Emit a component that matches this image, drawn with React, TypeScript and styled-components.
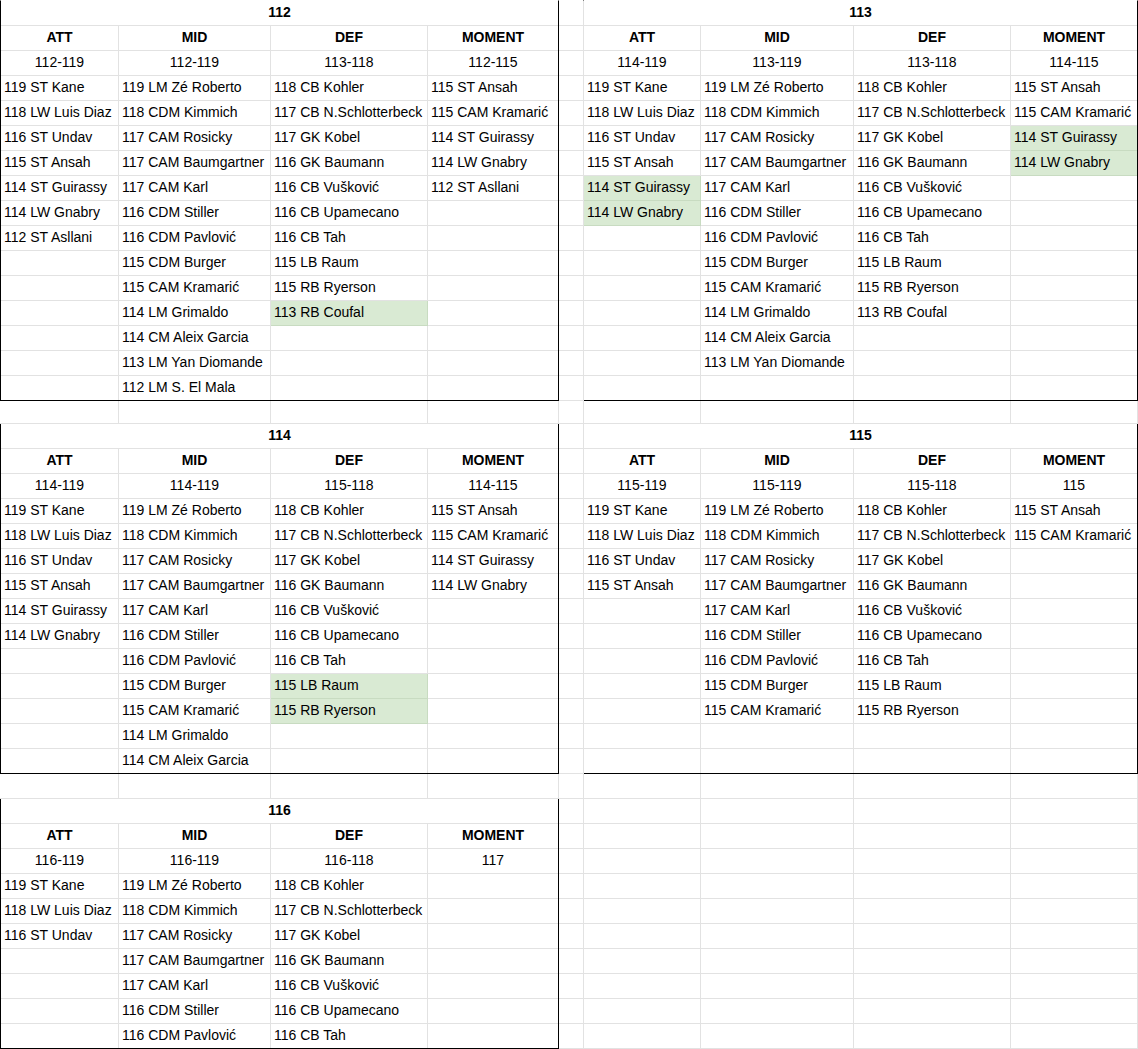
import styled, { createGlobalStyle } from 'styled-components'

const GlobalStyle = createGlobalStyle`
  html, body {
    margin: 0;
    padding: 0;
    background: #fff;
    overflow: hidden;
  }
  body {
    font-family: 'Liberation Sans', Arial, sans-serif;
  }
`

const GRID = '#e2e2e2'
const GREEN = '#d9ead3'

// sheet columns: A-D left tables, E spacer, F-I right tables
const SHEET_COLS = [119, 152, 157, 131, 25, 117, 153, 157, 127]
const SHEET_ROWS = [
  ...Array(16).fill(25),
  23,
  ...Array(14).fill(25),
  25,
  ...Array(11).fill(25),
]
const INNER_COLS = {
  left: [118, 152, 157, 130],
  right: [117, 153, 157, 126],
}

type Side = 'left' | 'right'
type Entry = string | { text: string; green: true }

interface Column {
  title: string
  range: string
  items: Entry[]
}

interface BlockData {
  level: string
  side: Side
  row: number
  rows: number
  columns: Column[]
}

const g = (text: string): Entry => ({ text, green: true })

const ATT = [
  '119 ST Kane',
  '118 LW Luis Diaz',
  '116 ST Undav',
  '115 ST Ansah',
  '114 ST Guirassy',
  '114 LW Gnabry',
  '112 ST Asllani',
]
const MID = [
  '119 LM Zé Roberto',
  '118 CDM Kimmich',
  '117 CAM Rosicky',
  '117 CAM Baumgartner',
  '117 CAM Karl',
  '116 CDM Stiller',
  '116 CDM Pavlović',
  '115 CDM Burger',
  '115 CAM Kramarić',
  '114 LM Grimaldo',
  '114 CM Aleix Garcia',
  '113 LM Yan Diomande',
  '112 LM S. El Mala',
]
const DEF = [
  '118 CB Kohler',
  '117 CB N.Schlotterbeck',
  '117 GK Kobel',
  '116 GK Baumann',
  '116 CB Vušković',
  '116 CB Upamecano',
  '116 CB Tah',
  '115 LB Raum',
  '115 RB Ryerson',
  '113 RB Coufal',
]
const MOMENT = [
  '115 ST Ansah',
  '115 CAM Kramarić',
  '114 ST Guirassy',
  '114 LW Gnabry',
  '112 ST Asllani',
]

const BLOCKS: BlockData[] = [
  {
    level: '112',
    side: 'left',
    row: 0,
    rows: 16,
    columns: [
      { title: 'ATT', range: '112-119', items: ATT },
      { title: 'MID', range: '112-119', items: MID },
      { title: 'DEF', range: '113-118', items: [...DEF.slice(0, 9), g(DEF[9])] },
      { title: 'MOMENT', range: '112-115', items: MOMENT },
    ],
  },
  {
    level: '113',
    side: 'right',
    row: 0,
    rows: 16,
    columns: [
      { title: 'ATT', range: '114-119', items: [...ATT.slice(0, 4), g(ATT[4]), g(ATT[5])] },
      { title: 'MID', range: '113-119', items: MID.slice(0, 12) },
      { title: 'DEF', range: '113-118', items: DEF },
      { title: 'MOMENT', range: '114-115', items: [...MOMENT.slice(0, 2), g(MOMENT[2]), g(MOMENT[3])] },
    ],
  },
  {
    level: '114',
    side: 'left',
    row: 17,
    rows: 14,
    columns: [
      { title: 'ATT', range: '114-119', items: ATT.slice(0, 6) },
      { title: 'MID', range: '114-119', items: MID.slice(0, 11) },
      { title: 'DEF', range: '115-118', items: [...DEF.slice(0, 7), g(DEF[7]), g(DEF[8])] },
      { title: 'MOMENT', range: '114-115', items: MOMENT.slice(0, 4) },
    ],
  },
  {
    level: '115',
    side: 'right',
    row: 17,
    rows: 14,
    columns: [
      { title: 'ATT', range: '115-119', items: ATT.slice(0, 4) },
      { title: 'MID', range: '115-119', items: MID.slice(0, 9) },
      { title: 'DEF', range: '115-118', items: DEF.slice(0, 9) },
      { title: 'MOMENT', range: '115', items: MOMENT.slice(0, 2) },
    ],
  },
  {
    level: '116',
    side: 'left',
    row: 32,
    rows: 10,
    columns: [
      { title: 'ATT', range: '116-119', items: ATT.slice(0, 3) },
      { title: 'MID', range: '116-119', items: MID.slice(0, 7) },
      { title: 'DEF', range: '116-118', items: DEF.slice(0, 7) },
      { title: 'MOMENT', range: '117', items: [] },
    ],
  },
]

const Sheet = styled.div`
  display: grid;
  grid-template-columns: ${SHEET_COLS.map((w) => `${w}px`).join(' ')};
  grid-template-rows: ${SHEET_ROWS.map((h) => `${h}px`).join(' ')};
  padding-top: 1px;
  width: 1138px;
  font-family: 'Liberation Sans', Arial, sans-serif;
  font-size: 14px;
  color: #000;
`

const EmptyCell = styled.div`
  border-right: 1px solid ${GRID};
  border-bottom: 1px solid ${GRID};
`

interface BlockProps {
  $side: Side
  $row: number
  $rows: number
}
const Block = styled.section<BlockProps>`
  grid-column: ${(p) => (p.$side === 'left' ? '1 / 5' : '6 / 10')};
  grid-row: ${(p) => p.$row + 1} / span ${(p) => p.$rows};
  margin-top: -1px;
  margin-left: ${(p) => (p.$side === 'right' ? '-1px' : '0')};
  border: 1px solid #000;
  border-top-color: ${(p) => (p.$row === 0 ? '#fff' : '#000')};
  display: grid;
  grid-template-columns: ${(p) => INNER_COLS[p.$side].map((w) => `${w}px`).join(' ')};
  grid-template-rows: repeat(${(p) => p.$rows - 1}, 25px) 24px;
  min-width: 0;
`

interface CellProps {
  $center?: boolean
  $bold?: boolean
  $green?: boolean
  $lastCol?: boolean
  $lastRow?: boolean
}
const Cell = styled.div<CellProps>`
  padding: 0 3px;
  line-height: 23px;
  white-space: nowrap;
  overflow: hidden;
  text-align: ${(p) => (p.$center ? 'center' : 'left')};
  font-weight: ${(p) => (p.$bold ? 700 : 400)};
  background: ${(p) => (p.$green ? GREEN : 'transparent')};
  border-right: ${(p) => (p.$lastCol ? 'none' : `1px solid ${p.$green ? '#c8dbc1' : GRID}`)};
  border-bottom: ${(p) => (p.$lastRow ? 'none' : `1px solid ${p.$green ? '#c8dbc1' : GRID}`)};
`

const TitleCell = styled(Cell)`
  grid-column: 1 / -1;
`

function LevelBlock({ block }: { block: BlockData }) {
  const { level, side, row, rows, columns } = block
  const body = []
  for (let r = 0; r < rows - 3; r++) {
    columns.forEach((col, c) => {
      const entry = col.items[r]
      const text = entry === undefined ? '' : typeof entry === 'string' ? entry : entry.text
      const green = typeof entry === 'object'
      body.push(
        <Cell key={`${r}-${c}`} $green={green} $lastCol={c === 3} $lastRow={r === rows - 4}>
          {text}
        </Cell>
      )
    })
  }

  return (
    <Block $side={side} $row={row} $rows={rows}>
      <TitleCell $center $bold $lastCol>
        {level}
      </TitleCell>
      {columns.map((col, c) => (
        <Cell key={`h${c}`} $center $bold $lastCol={c === 3}>
          {col.title}
        </Cell>
      ))}
      {columns.map((col, c) => (
        <Cell key={`r${c}`} $center $lastCol={c === 3}>
          {col.range}
        </Cell>
      ))}
      {body}
    </Block>
  )
}

export default function App() {
  const occupied = BLOCKS.reduce((sum, b) => sum + b.rows * 4, 0)
  const fillers = SHEET_COLS.length * SHEET_ROWS.length - occupied

  return (
    <>
      <GlobalStyle />
      <Sheet>
        {BLOCKS.map((b) => (
          <LevelBlock key={b.level} block={b} />
        ))}
        {Array.from({ length: fillers }, (_, i) => (
          <EmptyCell key={`e${i}`} />
        ))}
      </Sheet>
    </>
  )
}
